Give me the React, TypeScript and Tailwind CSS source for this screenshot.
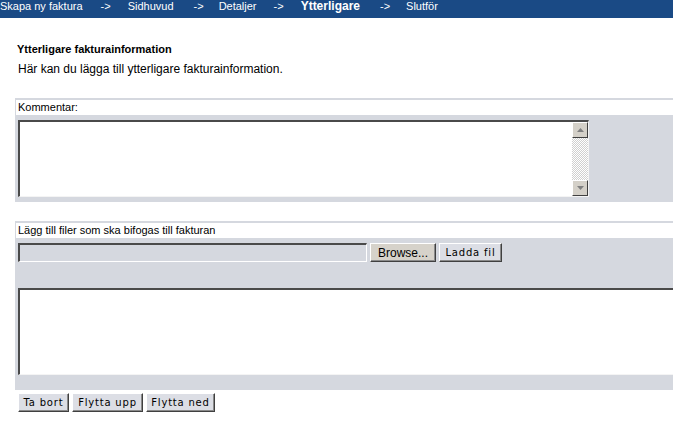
import type { ReactNode } from 'react'

const steps = [
    { label: 'Skapa ny faktura', ml: 'ml-0' },
    { label: '->', ml: 'ml-[18px]' },
    { label: 'Sidhuvud', ml: 'ml-[17px]' },
    { label: '->', ml: 'ml-[20px]' },
    { label: 'Detaljer', ml: 'ml-[15px]' },
    { label: '->', ml: 'ml-[17px]' },
    { label: 'Ytterligare', ml: 'ml-[17px]', active: true },
    { label: '->', ml: 'ml-[20px]' },
    { label: 'Slutför', ml: 'ml-[16px]' },
]

// klassisk 3D-knapp
function Btn({ children, w, tone = 'light' }: { children: ReactNode; w: string; tone?: 'light' | 'beige' }) {
    return (
        <button
            className={`${w} h-[19px] flex items-center justify-center border border-t-white border-l-white border-b-[#404040] border-r-[#404040] shadow-[inset_-1px_-1px_0_#8a8a8a] ${tone === 'beige' ? 'bg-[#d6d2ca] text-[12px] font-["Liberation_Sans",sans-serif]' : 'bg-[#dcdee5] text-[10px] tracking-[0.8px] font-["DejaVu_Sans",sans-serif]'} text-black leading-none`}
        >
            {children}
        </button>
    )
}

function Section({ label, children, pb }: { label: string; children: ReactNode; pb: string }) {
    return (
        <div className="ml-[15px] bg-[#d5d8df] pt-[2px] pl-[1px]">
            <div className="bg-white h-[15px] pl-[2px] text-[11px] leading-[15px] text-black">{label}</div>
            <div className={`pl-[2px] pt-[5px] ${pb}`}>{children}</div>
        </div>
    )
}

export default function App() {
    return (
        <div className="w-[673px] h-[431px] overflow-hidden bg-white font-['Liberation_Sans',Arial,sans-serif]">
            {/* Steg-meny */}
            <div className="h-[18px] bg-[#1a4a85] flex items-start text-white text-[11px] leading-[12px]">
                {steps.map((s, i) => (
                    <span
                        key={i}
                        className={`${s.ml} whitespace-nowrap ${s.active ? 'font-bold text-[12px] leading-[13px]' : ''}`}
                    >
                        {s.label}
                    </span>
                ))}
            </div>

            {/* Rubrik */}
            <div className="pl-[17px] pt-[25px]">
                <h1 className="text-[11px] font-bold leading-[13px] text-black">Ytterligare fakturainformation</h1>
                <p className="mt-[6px] pl-[1px] text-[12px] leading-[14px] text-black">
                    Här kan du lägga till ytterligare fakturainformation.
                </p>
            </div>

            {/* Kommentar */}
            <div className="mt-[22px]">
                <Section label="Kommentar:" pb="pb-[5px]">
                    <div className="w-[571px] h-[77px] flex border-t-2 border-l-2 border-t-[#4a4a4a] border-l-[#4a4a4a] border-b border-r border-b-[#f4f4f4] border-r-[#f4f4f4] bg-white">
                        <textarea className="flex-1 resize-none outline-none bg-white" />
                        <div className="w-[16px] flex flex-col bg-[repeating-conic-gradient(#d0d0d0_0_25%,#ffffff_0_50%)] bg-[length:2px_2px]">
                            <div className="h-[16px] bg-[#d4d0c8] border border-t-white border-l-white border-b-[#404040] border-r-[#404040] flex items-center justify-center">
                                <svg width="7" height="4" viewBox="0 0 7 4"><path d="M3.5 0L7 4H0z" fill="#808080" /></svg>
                            </div>
                            <div className="flex-1" />
                            <div className="h-[16px] bg-[#d4d0c8] border border-t-white border-l-white border-b-[#404040] border-r-[#404040] flex items-center justify-center">
                                <svg width="7" height="4" viewBox="0 0 7 4"><path d="M0 0H7L3.5 4z" fill="#808080" /></svg>
                            </div>
                        </div>
                    </div>
                </Section>
            </div>

            {/* Bifogade filer */}
            <div className="mt-[19px]">
                <Section label="Lägg till filer som ska bifogas till fakturan" pb="pb-[15px]">
                    <div className="flex items-center gap-[3px]">
                        <div className="w-[349px] h-[19px] bg-[#d5d8df] border-t-2 border-l-2 border-t-[#4a4a4a] border-l-[#4a4a4a] border-b border-r border-b-white border-r-white" />
                        <Btn w="w-[66px]" tone="beige">Browse...</Btn>
                        <Btn w="w-[63px]">Ladda fil</Btn>
                    </div>
                    <div className="mt-[26px] h-[87px] bg-white border-t-2 border-l-2 border-t-[#4a4a4a] border-l-[#4a4a4a] border-b border-b-[#f4f4f4]" />
                </Section>
            </div>

            {/* Knappar */}
            <div className="pl-[18px] pt-[3px] flex gap-[3px]">
                <Btn w="w-[51px]">Ta bort</Btn>
                <Btn w="w-[71px]">Flytta upp</Btn>
                <Btn w="w-[69px]">Flytta ned</Btn>
            </div>
        </div>
    )
}
